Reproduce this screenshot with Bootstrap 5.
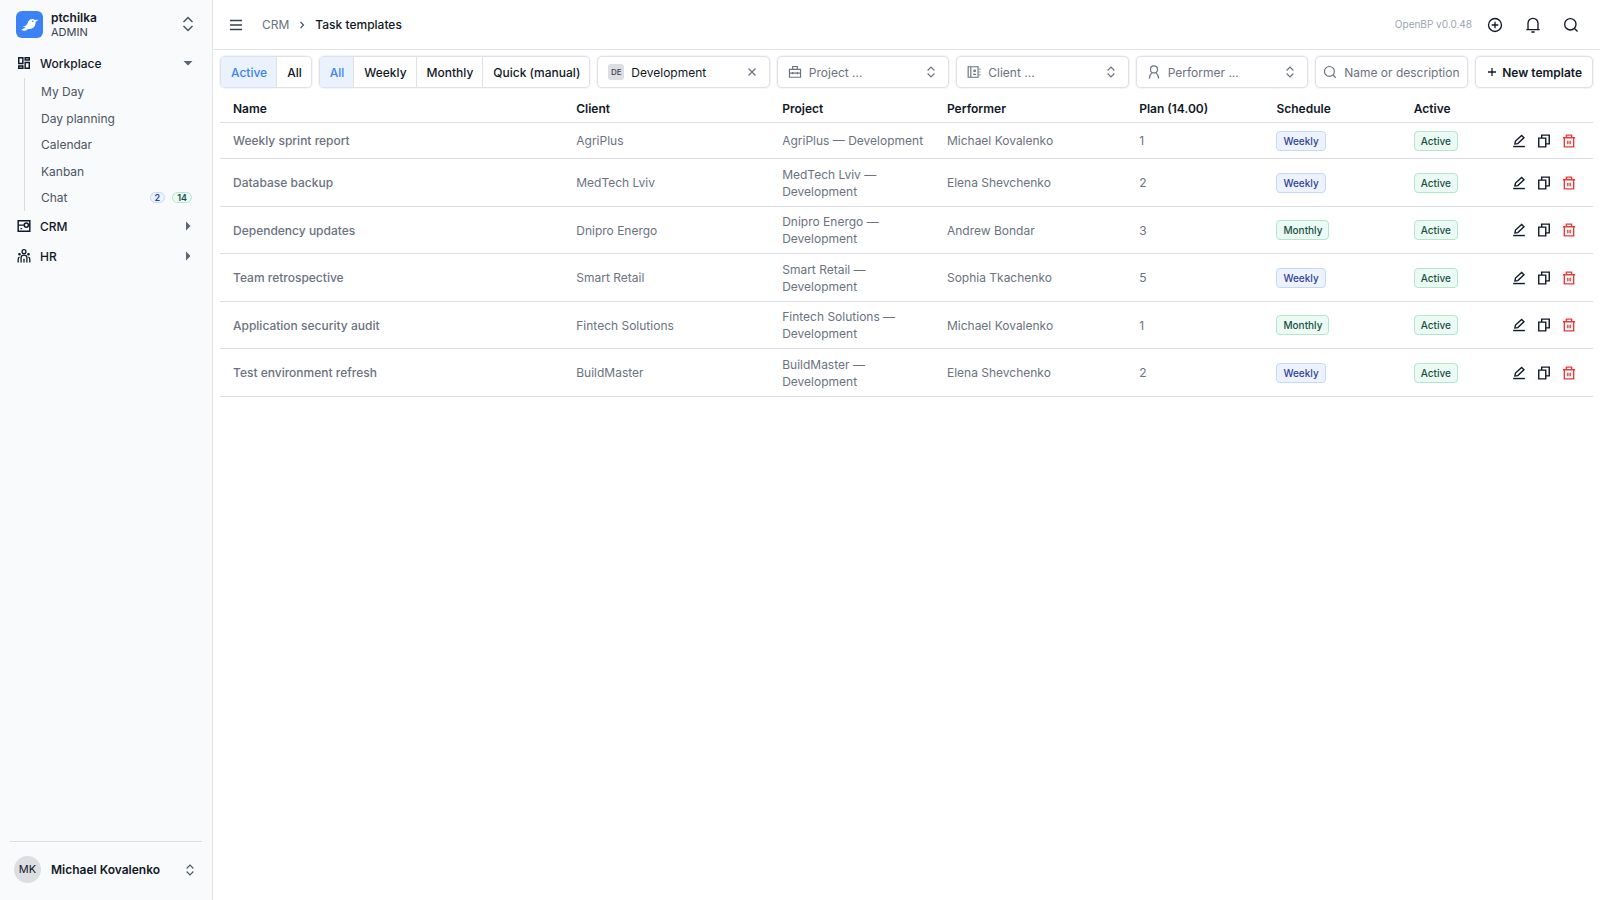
<!DOCTYPE html>
<html lang="en">
<head>
<meta charset="utf-8">
<meta name="viewport" content="width=device-width, initial-scale=1">
<title>Task templates</title>
<link href="https://cdn.jsdelivr.net/npm/bootstrap@5.3.0/dist/css/bootstrap.min.css" rel="stylesheet">
<style>
:root { --ink:#111827; --soft:#6b7280; --mid:#374151; --line:#e2e4e9; --ctl:#dfe1e7; --blue:#3b82f6; }
body { font-family: Inter, "Liberation Sans", sans-serif; font-size: 12px; line-height: 17px; color: var(--ink); background: #fff; }
button, input { font-family: inherit; }
svg { fill: none; stroke: currentColor; stroke-width: 2; flex: none; display: block; }
.s12 { width: 12px; height: 12px; } .s14 { width: 14px; height: 14px; } .s16 { width: 16px; height: 16px; }
.plain { background: none; border: 0; padding: 0; color: inherit; text-align: left; }
.c-ink { color: var(--ink); } .c-soft { color: var(--soft); } .c-mid { color: #4b5563; }
.side { width: 213px; background: #f9fafc; border-right: 1px solid var(--line); }
.brand-row { height: 48px; padding: 0 16px; gap: 8px; }
.logo { width: 27px; height: 27px; border-radius: 6px; background: var(--blue); color: #fff; }
.brand-name { font-weight: 600; line-height: 15px; }
.brand-role { font-size: 11px; line-height: 14px; color: var(--mid); }
.nav-top { height: 30px; padding: 0 18px 0 17px; gap: 9px; color: var(--ink); text-decoration: none; font-weight: 500; }
.sub-list { margin-left: 24px; padding-left: 16px; border-left: 1px solid #d8dbe0; }
.sub-list a { height: 27px; color: #4b5563; text-decoration: none; padding-right: 20px; gap: 7px; }
.sub-list a:nth-child(even) { height: 26px; }
.count { font-size: 9px; line-height: 9px; font-weight: 600; padding: 0 4px; border: 1px solid; border-radius: 6px; }
.user-row { margin: 0 10px; height: 59px; padding: 0 6px 3px 4px; gap: 10px; border-top: 1px solid #d8dbe0; font-weight: 600; }
.face { width: 27px; height: 27px; background: #dcdee1; font-size: 11px; font-weight: 400; }
.topbar { height: 50px; border-bottom: 1px solid var(--line); padding: 0 21px 0 15px; }
.topbar .menu-btn { margin-right: 18px; color: var(--mid); }
.crumbs { gap: 7px; }
.here { font-weight: 500; }
.version { font-size: 10px; color: #9ca3af; }
.tools { gap: 22px; margin-left: 15px; }
.filters { padding: 6px 7px 8px; gap: 7px; }
.ctl { height: 32px; border: 1px solid var(--ctl); border-radius: 5px; background: #fff; font-weight: 500; box-shadow: 0 0 0 1px #f4f5f7; }
.seg { overflow: hidden; }
.seg button { border: 0; border-left: 1px solid var(--ctl); background: #fff; padding: 0 9px 0 10px; font-weight: 500; color: var(--ink); white-space: nowrap; }
.seg button:first-child { border-left: 0; }
.seg button.on { background: #eaf2fe; color: var(--blue); }
.pick { flex: 1 1 0; min-width: 120px; padding: 0 11px 0 10px; gap: 7px; color: var(--soft); font-weight: 400; }
.chip { width: 16px; height: 16px; border-radius: 3px; background: #dcdee1; color: var(--mid); font-size: 8px; font-weight: 500; line-height: 16px; text-align: center; }
.find { width: 153px; padding: 0 7px; gap: 7px; color: var(--soft); }
.find input { border: 0; outline: 0; padding: 0; width: 100%; min-width: 0; background: none; font-size: 12px; color: var(--ink); }
.find input::placeholder { color: var(--soft); opacity: 1; }
.add { padding: 0 10px; gap: 4px; color: var(--ink); font-weight: 600; white-space: nowrap; }
.grid-wrap { padding: 0 7px; }
.tpl { table-layout: fixed; width: 100%; margin: 0; color: var(--soft); border-color: #dcdee4; }
.tpl > :not(caption) > * > * { padding: 6px 4px 6px 13px; color: inherit; background: none; box-shadow: none; vertical-align: middle; }
.tpl > thead > tr > th { padding: 4px 4px 5px 13px; color: var(--ink); font-weight: 600; border-bottom: 1px solid #dcdee4; }
.tpl tbody tr { height: 48px; }
.tpl tbody tr:nth-child(odd) { height: 47px; }
.tpl tbody tr:first-child { height: 36px; }
.tpl tbody th { font-weight: 500; }
.tag { display: inline-block; font-size: 10px; line-height: 18px; font-weight: 500; padding: 0 6px; border: 1px solid; border-radius: 4px; vertical-align: middle; }
.tone-blue { color: #2f449b; background: #edf3fe; border-color: #c5d8fb; }
.tone-green { color: #175045; background: #ebfbf4; border-color: #b4e6cf; }
.acts { gap: 11px; padding-right: 13px; color: var(--ink); }
.acts svg { stroke-width: 2.4; }
.acts .del { color: #ea3a3a; }
</style>
</head>
<body>
<svg width="0" height="0" class="position-absolute" aria-hidden="true">
  <symbol id="updown" viewBox="0 0 16 16"><path d="M3.500 6 8 1.500 12.500 6M3.500 10 8 14.500 12.500 10" stroke-width="1.500"/></symbol>
  <symbol id="lens" viewBox="0 0 24 24"><circle cx="11" cy="11" r="8.500"/><path d="m17.200 17.200 4.600 4.600"/></symbol>
  <symbol id="edit" viewBox="0 0 24 24"><path d="M2 21.500h20"/><path d="m5 17 1-5L16.500 2.500l4 4L10 16.500 5 17Z"/></symbol>
  <symbol id="copy" viewBox="0 0 24 24"><path d="M3 7h12v15H3z"/><path d="M8 7V2h13v15h-6"/></symbol>
  <symbol id="bin" viewBox="0 0 24 24"><path d="M1.500 6.500h21M4 6.500V22h16V6.500M7.500 6V2h9v4M10 11.500v6M14 11.500v6"/></symbol>
</svg>
<div class="d-flex min-vh-100">
  <aside class="side d-flex flex-column flex-shrink-0">
    <button class="plain brand-row d-flex align-items-center" type="button">
      <span class="logo d-flex align-items-center justify-content-center"><svg width="21" height="21" viewBox="0 0 21 21"><path fill="currentColor" stroke="none" d="M2.500 15.500c1.300-.8 3-1.200 4.400-2.300-1.300.1-2.500-.1-3.300-.6 3.200-.5 4.600-2 5.300-4.200C9.500 6.300 11.200 5 13.300 5c1.100 0 2 .3 2.600.9l3.600-.2-3 2.200c.3 4-2.200 6.700-5.700 7-1.700.1-2.700.4-3.600 1.300-1.400 1-3.600.6-4.700-.7Z"/><circle cx="13.800" cy="7.300" r=".8" fill="#3b82f6" stroke="none"/></svg></span>
      <span class="flex-grow-1"><span class="brand-name d-block">ptchilka</span><span class="brand-role d-block">ADMIN</span></span>
      <svg class="s16 c-mid"><use href="#updown"/></svg>
    </button>
    <nav>
      <a class="nav-top d-flex align-items-center" href="#">
        <svg class="s14" viewBox="0 0 24 24"><path d="M3 3h7v10H3zM14 3h7v4h-7zM14 11h7v10h-7zM3 17h7v4H3z" stroke-width="2.500"/></svg>
        <span class="flex-grow-1">Workplace</span>
        <svg width="12" height="8" viewBox="0 0 12 8"><path d="M1.500 2h9L6 6.500z" fill="#5b6575" stroke="none"/></svg>
      </a>
      <div class="sub-list">
        <a class="d-flex align-items-center" href="#">My Day</a>
        <a class="d-flex align-items-center" href="#">Day planning</a>
        <a class="d-flex align-items-center" href="#">Calendar</a>
        <a class="d-flex align-items-center" href="#">Kanban</a>
        <a class="d-flex align-items-center" href="#"><span class="flex-grow-1">Chat</span><span class="count tone-blue">2</span><span class="count tone-green">14</span></a>
      </div>
      <a class="nav-top d-flex align-items-center" href="#">
        <svg class="s14" viewBox="0 0 24 24"><path d="M2 3h20v18H2zM2 10.500h10M20 10.500h2" stroke-width="2.500"/><circle cx="16" cy="10.500" r="3.500" stroke-width="2.500"/><path d="M6 16.500h3"/></svg>
        <span class="flex-grow-1">CRM</span>
        <svg width="12" height="10" viewBox="0 0 12 10"><path d="m4 .5 4.500 4.500L4 9.500z" fill="#5b6575" stroke="none"/></svg>
      </a>
      <a class="nav-top d-flex align-items-center" href="#">
        <svg class="s14" viewBox="0 0 24 24"><circle cx="12" cy="4.500" r="3.300" stroke-width="2.200"/><path d="M7 23v-5.500M7 17.500v-2.500c0-6 10-6 10 0v8M12 16.500V23M2 23v-5c0-2 .8-3.500 2.500-4M22 23v-5c0-2-.8-3.500-2.500-4" stroke-width="2.200"/><circle cx="4.300" cy="9" r="1.300" fill="currentColor"/><circle cx="19.700" cy="9" r="1.300" fill="currentColor"/></svg>
        <span class="flex-grow-1">HR</span>
        <svg width="12" height="10" viewBox="0 0 12 10"><path d="m4 .5 4.500 4.500L4 9.500z" fill="#5b6575" stroke="none"/></svg>
      </a>
    </nav>
    <button class="plain user-row d-flex align-items-center mt-auto" type="button">
      <span class="face rounded-circle d-flex align-items-center justify-content-center">MK</span>
      <span class="flex-grow-1">Michael Kovalenko</span>
      <svg class="s12 c-mid"><use href="#updown"/></svg>
    </button>
  </aside>

  <div class="flex-grow-1 overflow-hidden">
    <header class="topbar d-flex align-items-center">
      <button class="plain menu-btn" type="button" aria-label="Menu"><svg class="s16" viewBox="0 0 16 16"><path d="M2 3.500h12M2 8h12M2 12.500h12" stroke-width="1.500"/></svg></button>
      <nav class="crumbs d-flex align-items-center flex-grow-1" aria-label="Breadcrumb">
        <a href="#" class="text-decoration-none c-soft">CRM</a>
        <svg class="s12 c-mid" viewBox="0 0 12 12"><path d="M4.500 3 7.500 6l-3 3" stroke-width="1.200"/></svg>
        <span class="here">Task templates</span>
      </nav>
      <span class="version">OpenBP v0.0.48</span>
      <div class="tools d-flex">
        <button class="plain" type="button" aria-label="Create"><svg class="s16" viewBox="0 0 24 24"><circle cx="12" cy="12" r="9.700"/><path d="M12 7v10M7 12h10"/></svg></button>
        <button class="plain" type="button" aria-label="Notifications"><svg class="s16" viewBox="0 0 24 24"><path d="M2 19h20M4.500 19v-9.500a7.500 7.500 0 0 1 15 0V19M9.500 22.500h5"/></svg></button>
        <button class="plain" type="button" aria-label="Search"><svg class="s16"><use href="#lens"/></svg></button>
      </div>
    </header>

    <main>
      <div class="filters d-flex">
        <div class="ctl seg d-flex"><button type="button" class="on">Active</button><button type="button">All</button></div>
        <div class="ctl seg d-flex"><button type="button" class="on">All</button><button type="button">Weekly</button><button type="button">Monthly</button><button type="button">Quick (manual)</button></div>
        <button type="button" class="ctl pick d-flex align-items-center"><span class="chip">DE</span><span class="flex-grow-1 text-start c-ink">Development</span><svg class="s12" viewBox="0 0 12 12"><path d="m2.500 2.500 7 7M9.500 2.500l-7 7" stroke-width="1.200"/></svg></button>
        <button type="button" class="ctl pick d-flex align-items-center"><svg class="s14" viewBox="0 0 24 24"><path d="M2.500 7.500h19V21h-19zM8 7.500V2.500h8v5M2.500 14h19M8 12v4M16 12v4"/></svg><span class="flex-grow-1 text-start">Project ...</span><svg class="s12"><use href="#updown"/></svg></button>
        <button type="button" class="ctl pick d-flex align-items-center"><svg class="s14" viewBox="0 0 24 24"><path d="M2 3h17v18H2zM6.500 3v18M22 6v2M22 11v2M22 16v2M10.500 16h5"/><circle cx="13" cy="10" r="1.500"/></svg><span class="flex-grow-1 text-start">Client ...</span><svg class="s12"><use href="#updown"/></svg></button>
        <button type="button" class="ctl pick d-flex align-items-center"><svg class="s14" viewBox="0 0 24 24"><circle cx="12" cy="7.500" r="6"/><path d="M4 23c0-5 2-7.500 5-9.500M20 23c0-5-2-7.500-5-9.500"/></svg><span class="flex-grow-1 text-start">Performer ...</span><svg class="s12"><use href="#updown"/></svg></button>
        <label class="ctl find d-flex align-items-center"><svg class="s14"><use href="#lens"/></svg><input type="text" placeholder="Name or description ..." aria-label="Name or description"></label>
        <button type="button" class="ctl add d-flex align-items-center"><svg class="s12" viewBox="0 0 12 12"><path d="M6 2v8M2 6h8" stroke-width="1.300"/></svg>New template</button>
      </div>

      <div class="grid-wrap">
        <table class="table tpl">
          <colgroup><col style="width:25%"><col style="width:15%"><col style="width:12%"><col style="width:14%"><col style="width:10%"><col style="width:10%"><col style="width:6%"><col style="width:8%"></colgroup>
          <thead><tr><th>Name</th><th>Client</th><th>Project</th><th>Performer</th><th>Plan (14.00)</th><th>Schedule</th><th>Active</th><th></th></tr></thead>
          <tbody>
            <tr><th scope="row">Weekly sprint report</th><td>AgriPlus</td><td>AgriPlus — Development</td><td>Michael Kovalenko</td><td>1</td><td><span class="tag tone-blue">Weekly</span></td><td><span class="tag tone-green">Active</span></td><td><div class="acts d-flex justify-content-end"><button class="plain" type="button" aria-label="Edit"><svg class="s14"><use href="#edit"/></svg></button><button class="plain" type="button" aria-label="Copy"><svg class="s14"><use href="#copy"/></svg></button><button class="plain del" type="button" aria-label="Delete"><svg class="s14"><use href="#bin"/></svg></button></div></td></tr>
            <tr><th scope="row">Database backup</th><td>MedTech Lviv</td><td>MedTech Lviv — Development</td><td>Elena Shevchenko</td><td>2</td><td><span class="tag tone-blue">Weekly</span></td><td><span class="tag tone-green">Active</span></td><td><div class="acts d-flex justify-content-end"><button class="plain" type="button" aria-label="Edit"><svg class="s14"><use href="#edit"/></svg></button><button class="plain" type="button" aria-label="Copy"><svg class="s14"><use href="#copy"/></svg></button><button class="plain del" type="button" aria-label="Delete"><svg class="s14"><use href="#bin"/></svg></button></div></td></tr>
            <tr><th scope="row">Dependency updates</th><td>Dnipro Energo</td><td>Dnipro Energo — Development</td><td>Andrew Bondar</td><td>3</td><td><span class="tag tone-green">Monthly</span></td><td><span class="tag tone-green">Active</span></td><td><div class="acts d-flex justify-content-end"><button class="plain" type="button" aria-label="Edit"><svg class="s14"><use href="#edit"/></svg></button><button class="plain" type="button" aria-label="Copy"><svg class="s14"><use href="#copy"/></svg></button><button class="plain del" type="button" aria-label="Delete"><svg class="s14"><use href="#bin"/></svg></button></div></td></tr>
            <tr><th scope="row">Team retrospective</th><td>Smart Retail</td><td>Smart Retail — Development</td><td>Sophia Tkachenko</td><td>5</td><td><span class="tag tone-blue">Weekly</span></td><td><span class="tag tone-green">Active</span></td><td><div class="acts d-flex justify-content-end"><button class="plain" type="button" aria-label="Edit"><svg class="s14"><use href="#edit"/></svg></button><button class="plain" type="button" aria-label="Copy"><svg class="s14"><use href="#copy"/></svg></button><button class="plain del" type="button" aria-label="Delete"><svg class="s14"><use href="#bin"/></svg></button></div></td></tr>
            <tr><th scope="row">Application security audit</th><td>Fintech Solutions</td><td>Fintech Solutions — Development</td><td>Michael Kovalenko</td><td>1</td><td><span class="tag tone-green">Monthly</span></td><td><span class="tag tone-green">Active</span></td><td><div class="acts d-flex justify-content-end"><button class="plain" type="button" aria-label="Edit"><svg class="s14"><use href="#edit"/></svg></button><button class="plain" type="button" aria-label="Copy"><svg class="s14"><use href="#copy"/></svg></button><button class="plain del" type="button" aria-label="Delete"><svg class="s14"><use href="#bin"/></svg></button></div></td></tr>
            <tr><th scope="row">Test environment refresh</th><td>BuildMaster</td><td>BuildMaster — Development</td><td>Elena Shevchenko</td><td>2</td><td><span class="tag tone-blue">Weekly</span></td><td><span class="tag tone-green">Active</span></td><td><div class="acts d-flex justify-content-end"><button class="plain" type="button" aria-label="Edit"><svg class="s14"><use href="#edit"/></svg></button><button class="plain" type="button" aria-label="Copy"><svg class="s14"><use href="#copy"/></svg></button><button class="plain del" type="button" aria-label="Delete"><svg class="s14"><use href="#bin"/></svg></button></div></td></tr>
          </tbody>
        </table>
      </div>
    </main>
  </div>
</div>
<script src="https://cdn.jsdelivr.net/npm/bootstrap@5.3.0/dist/js/bootstrap.bundle.min.js"></script>
</body>
</html>
